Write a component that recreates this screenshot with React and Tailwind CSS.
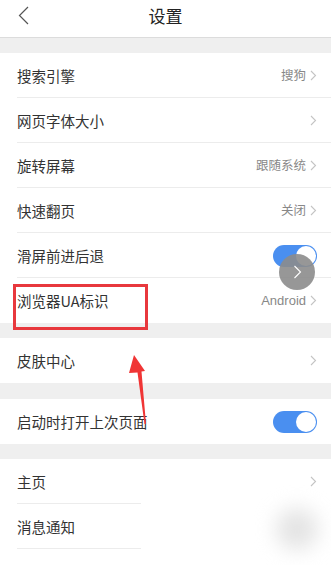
import React from "react";

const Chevron = () => (
  <svg width="7" height="11" viewBox="0 0 7 11" className="ml-[4px]">
    <path d="M1 1 L5.5 5.5 L1 10" fill="none" stroke="#c4c4c4" strokeWidth="1.1" />
  </svg>
);

const Toggle = () => (
  <div className="w-[44px] h-[22px] rounded-full bg-[#4a8ff0] relative">
    <div className="absolute right-[1px] top-[1px] w-[20px] h-[20px] rounded-full bg-white" />
  </div>
);

const Row = ({ label, value, toggle, chevron = true, divider = true, short = false }) => (
  <div className="h-[45px] flex items-center bg-white relative pl-[17px] pr-[14px]">
    <span className="text-[14.5px] text-[#333]">{label}</span>
    <div className="flex-1" />
    {toggle ? (
      <Toggle />
    ) : (
      <div className="flex items-center">
        {value && <span className="text-[12.5px] text-[#888]">{value}</span>}
        {chevron && <Chevron />}
      </div>
    )}
    {divider && (
      <div
        className={
          short
            ? "absolute left-[17px] bottom-0 h-px w-[124px] bg-[#ececec]"
            : "absolute left-[17px] right-0 bottom-0 h-px bg-[#ececec]"
        }
      />
    )}
  </div>
);

const Gap = () => <div className="h-[15px] bg-[#efefef]" />;

export default function App() {
  return (
    <div
      className="relative w-[331px] h-[565px] overflow-hidden bg-white"
      style={{ fontFamily: '"Noto Sans CJK SC", "Noto Sans", sans-serif' }}
    >
      <div className="h-[38px] flex items-center justify-center relative border-b border-[#dcdcdc] bg-white">
        <svg width="12" height="20" viewBox="0 0 12 20" className="absolute left-[18px] top-[6px]">
          <path d="M10 1 L1.5 9.5 L10 18" fill="none" stroke="#555" strokeWidth="1.2" />
        </svg>
        <span className="text-[17px] text-[#222] -mt-[5px]">设置</span>
      </div>
      <Gap />
      <Row label="搜索引擎" value="搜狗" />
      <Row label="网页字体大小" />
      <Row label="旋转屏幕" value="跟随系统" />
      <Row label="快速翻页" value="关闭" />
      <Row label="滑屏前进后退" toggle />
      <Row label="浏览器UA标识" value={<span className="text-[13px]" style={{ fontFamily: '"Liberation Sans", sans-serif' }}>Android</span>} divider={false} />
      <Gap />
      <Row label="皮肤中心" divider={false} />
      <div className="h-[16px] bg-[#efefef]" />
      <Row label="启动时打开上次页面" toggle divider={false} />
      <Gap />
      <Row label="主页" short />
      <Row label="消息通知" chevron={false} short />
      <Row label="" chevron={false} divider={false} />

      {/* floating gray button */}
      <div className="absolute left-[279px] top-[254px] w-[36px] h-[36px] rounded-full bg-[#8c8c8c]/90 flex items-center justify-center">
        <svg width="9" height="14" viewBox="0 0 9 14">
          <path d="M1.5 1 L7.5 7 L1.5 13" fill="none" stroke="#fff" strokeWidth="1.1" />
        </svg>
      </div>

      {/* blurred blob */}
      <div className="absolute left-[276px] top-[508px] w-[42px] h-[42px] rounded-full bg-[#e4e4e4] blur-[10px]" />

      {/* red box */}
      <div className="absolute left-[13px] top-[284px] w-[135px] h-[46px] border-[3px] border-[#e8383d]" />

      {/* red arrow */}
      <svg className="absolute left-[120px] top-[350px]" width="40" height="80" viewBox="0 0 40 80">
        <path d="M14 5 L25 21 L21.5 21.5 L26 74 L24.5 74 L17.5 22.5 L9 23 Z" fill="#f03535" />
      </svg>
    </div>
  );
}
